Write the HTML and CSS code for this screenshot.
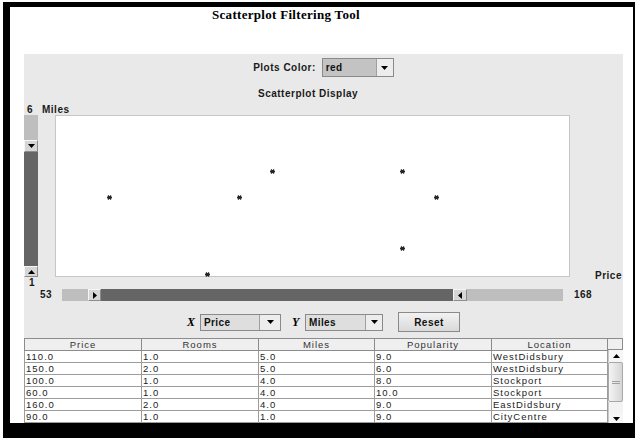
FILE: index.html
```html
<!DOCTYPE html>
<html lang="en">
<head>
<meta charset="utf-8">
<title>Scatterplot Filtering Tool</title>
<link rel="stylesheet" href="styles.css">
</head>
<body>
<div class="frame">
  <h1 class="title">Scatterplot Filtering Tool</h1>
  <div class="panel">
    <div class="color-row">
      <span class="lbl">Plots Color:</span>
      <div class="combo combo-color">
        <span class="combo-value">red</span>
        <span class="combo-btn"><svg width="7" height="4" viewBox="0 0 7 4"><polygon points="0,0 7,0 3.5,4"/></svg></span>
      </div>
    </div>

    <div class="lbl display-title">Scatterplot Display</div>
    <div class="lbl y-head"><span class="y-max">6</span><span>Miles</span></div>

    <div class="plot-row">
      <div class="vslider">
        <div class="track"></div>
        <div class="thumb thumb-top"><svg width="7" height="4" viewBox="0 0 7 4"><polygon points="0,0 7,0 3.5,4"/></svg></div>
        <div class="range"></div>
        <div class="thumb thumb-bottom"><svg width="7" height="4" viewBox="0 0 7 4"><polygon points="0,4 7,4 3.5,0"/></svg></div>
      </div>
      <div class="plot">
        <svg class="pt" style="left:53px;top:81px" viewBox="0 0 5 5"><path d="M0 2.5H5M1 0.5L4 4.5M4 0.5L1 4.5"/></svg>
        <svg class="pt" style="left:183px;top:81px" viewBox="0 0 5 5"><path d="M0 2.5H5M1 0.5L4 4.5M4 0.5L1 4.5"/></svg>
        <svg class="pt" style="left:216px;top:55px" viewBox="0 0 5 5"><path d="M0 2.5H5M1 0.5L4 4.5M4 0.5L1 4.5"/></svg>
        <svg class="pt" style="left:346px;top:55px" viewBox="0 0 5 5"><path d="M0 2.5H5M1 0.5L4 4.5M4 0.5L1 4.5"/></svg>
        <svg class="pt" style="left:380px;top:81px" viewBox="0 0 5 5"><path d="M0 2.5H5M1 0.5L4 4.5M4 0.5L1 4.5"/></svg>
        <svg class="pt" style="left:346px;top:132px" viewBox="0 0 5 5"><path d="M0 2.5H5M1 0.5L4 4.5M4 0.5L1 4.5"/></svg>
        <svg class="pt" style="left:151px;top:158px" viewBox="0 0 5 5"><path d="M0 2.5H5M1 0.5L4 4.5M4 0.5L1 4.5"/></svg>
      </div>
      <span class="lbl x-name">Price</span>
    </div>

    <div class="lbl y-min">1</div>

    <div class="x-row">
      <span class="lbl x-min">53</span>
      <div class="hslider">
        <div class="track track-lo"></div>
        <div class="thumb thumb-lo"><svg width="4" height="7" viewBox="0 0 4 7"><polygon points="0,0 4,3.5 0,7"/></svg></div>
        <div class="range"></div>
        <div class="thumb thumb-hi"><svg width="4" height="7" viewBox="0 0 4 7"><polygon points="4,0 0,3.5 4,7"/></svg></div>
        <div class="track track-hi"></div>
      </div>
      <span class="lbl x-max">168</span>
    </div>

    <div class="axis-row">
      <span class="axis">X</span>
      <div class="combo combo-x">
        <span class="combo-value">Price</span>
        <span class="combo-btn"><svg width="7" height="4" viewBox="0 0 7 4"><polygon points="0,0 7,0 3.5,4"/></svg></span>
      </div>
      <span class="axis axis-y">Y</span>
      <div class="combo combo-y">
        <span class="combo-value">Miles</span>
        <span class="combo-btn"><svg width="7" height="4" viewBox="0 0 7 4"><polygon points="0,0 7,0 3.5,4"/></svg></span>
      </div>
      <button class="reset" type="button">Reset</button>
    </div>

    <div class="table-pane">
      <table class="data">
        <colgroup>
          <col class="c1"><col class="c2"><col class="c3"><col class="c4"><col class="c5">
        </colgroup>
        <thead>
          <tr><th>Price</th><th>Rooms</th><th>Miles</th><th>Popularity</th><th>Location</th></tr>
        </thead>
        <tbody>
          <tr><td>110.0</td><td>1.0</td><td>5.0</td><td>9.0</td><td>WestDidsbury</td></tr>
          <tr><td>150.0</td><td>2.0</td><td>5.0</td><td>6.0</td><td>WestDidsbury</td></tr>
          <tr><td>100.0</td><td>1.0</td><td>4.0</td><td>8.0</td><td>Stockport</td></tr>
          <tr><td>60.0</td><td>1.0</td><td>4.0</td><td>10.0</td><td>Stockport</td></tr>
          <tr><td>160.0</td><td>2.0</td><td>4.0</td><td>9.0</td><td>EastDidsbury</td></tr>
          <tr><td>90.0</td><td>1.0</td><td>1.0</td><td>9.0</td><td>CityCentre</td></tr>
          <tr><td>130.0</td><td>2.0</td><td>4.0</td><td>8.0</td><td>Salford</td></tr>
        </tbody>
      </table>
      <div class="tscroll">
        <div class="tscroll-corner"></div>
        <div class="tscroll-btn"><svg width="7" height="4" viewBox="0 0 7 4"><polygon points="0,4 7,4 3.5,0"/></svg></div>
        <div class="tscroll-thumb"><span class="grip"></span></div>
        <div class="tscroll-track"></div>
        <div class="tscroll-btn"><svg width="7" height="4" viewBox="0 0 7 4"><polygon points="0,0 7,0 3.5,4"/></svg></div>
      </div>
    </div>
  </div>
</div>
</body>
</html>
```

FILE: styles.css
```css
* { box-sizing: border-box; }

html, body {
  margin: 0;
  padding: 0;
  background: #fff;
}

body {
  font-family: "Liberation Sans", Arial, sans-serif;
  color: #1a1a1a;
}

/* application window with its heavy black edge */
.frame {
  margin: 2px 0 0 3px;
  width: 632px;
  height: 436px;
  border: solid #000;
  border-width: 5px 2px 15px 7px;
  background: #fff;
  display: flex;
  flex-direction: column;
  overflow: hidden;
}

.title {
  flex: none;
  margin: 0;
  height: 47px;
  padding-left: 202px;
  font: bold 13px/15px "Liberation Serif", "Times New Roman", serif;
  letter-spacing: 0.3px;
  color: #000;
}

.panel {
  flex: 1;
  min-height: 0;
  margin: 0 10px 0 14px;
  background: #e9e9e9;
  display: flex;
  flex-direction: column;
  overflow: hidden;
}

.lbl {
  font-weight: bold;
  font-size: 10px;
  line-height: 12px;
  letter-spacing: 0.5px;
  color: #1a1a1a;
  white-space: nowrap;
}

svg polygon { fill: #000; }

/* combo boxes */
.combo {
  display: flex;
  border: 1px solid #8a8a8a;
  background: #dedede;
}

.combo-value {
  flex: 1;
  padding-left: 3px;
  font-weight: bold;
  font-size: 10px;
  letter-spacing: 0.4px;
  display: flex;
  align-items: center;
  color: #111;
}

.combo-btn {
  flex: none;
  width: 17px;
  border-left: 1px solid #a0a0a0;
  background: #ededed;
  display: flex;
  align-items: center;
  justify-content: center;
}

.color-row {
  flex: none;
  display: flex;
  justify-content: center;
  align-items: center;
  gap: 6px;
  padding-top: 4px;
}

.combo-color {
  width: 72px;
  height: 19px;
}

.combo-color .combo-value { background: #c3c3c3; }

.display-title {
  flex: none;
  margin-top: 11px;
  padding-left: 234px;
}

.y-head {
  flex: none;
  margin-top: 4px;
  height: 11px;
  display: flex;
  padding-left: 3px;
}

.y-max { width: 15px; }

/* plot area with the vertical range slider */
.plot-row {
  flex: none;
  display: flex;
  height: 162px;
}

.vslider {
  width: 14px;
  display: flex;
  flex-direction: column;
}

.track { background: #bebebe; }
.range { background: #656565; }

.thumb {
  background: #d6d6d6;
  border: 1px solid;
  border-color: #f6f6f6 #8c8c8c #8c8c8c #f6f6f6;
  display: flex;
  align-items: center;
  justify-content: center;
}

.vslider .track { height: 25px; }
.vslider .thumb-top { height: 12px; }
.vslider .range { height: 114px; }
.vslider .thumb-bottom { height: 11px; }

.plot {
  position: relative;
  margin-left: 17px;
  width: 515px;
  background: #fff;
  border: 1px solid #c6c6c6;
}

.pt {
  position: absolute;
  width: 5px;
  height: 5px;
  margin: -2px 0 0 -2px;
  fill: none;
  stroke: #262626;
  stroke-width: 1.3;
}

.x-name {
  align-self: flex-end;
  margin-left: 25px;
  margin-bottom: -5px;
}

.y-min {
  flex: none;
  height: 12px;
  padding-left: 5px;
}

/* horizontal range slider */
.x-row {
  flex: none;
  display: flex;
  align-items: center;
  height: 12px;
  padding-left: 16px;
}

.x-min { width: 22px; }

.hslider {
  width: 501px;
  height: 12px;
  display: flex;
}

.hslider .track-lo { width: 26px; }
.hslider .thumb-lo { width: 13px; }
.hslider .range { width: 352px; }
.hslider .thumb-hi { width: 14px; }
.hslider .track-hi { flex: 1; }

.x-max { margin-left: 11px; }

/* axis selectors */
.axis-row {
  flex: none;
  display: flex;
  align-items: center;
  height: 20px;
  margin-top: 11px;
  padding-left: 163px;
}

.axis {
  width: 13px;
  font: italic bold 12px/14px "Liberation Serif", "Times New Roman", serif;
  color: #000;
}

.axis-y { margin-left: 11px; }

.combo-x {
  width: 81px;
  height: 17px;
}

.combo-x .combo-btn { width: 21px; }

.combo-y {
  width: 78px;
  height: 17px;
}

.reset {
  margin-left: 15px;
  width: 62px;
  height: 20px;
  padding: 0;
  border: 1px solid #8a8a8a;
  background: linear-gradient(#f2f2f2, #d9d9d9);
  font: bold 10px "Liberation Sans", Arial, sans-serif;
  letter-spacing: 0.5px;
  color: #111;
}

/* data table */
.table-pane {
  flex: 1;
  min-height: 0;
  margin-top: 6px;
  display: flex;
  overflow: hidden;
}

.data {
  width: 583px;
  table-layout: fixed;
  border-collapse: collapse;
  background: #fff;
  font-family: "Liberation Sans", Arial, sans-serif;
  font-size: 9.5px;
  line-height: 11px;
  letter-spacing: 1px;
  color: #222;
  align-self: flex-start;
}

.c1, .c2, .c4 { width: 117px; }
.c3, .c5 { width: 116px; }

.data th {
  height: 12px;
  padding: 0;
  font-weight: normal;
  text-align: center;
  background: #efefef;
  border: 1px solid #8c8c8c;
  color: #333;
}

.data td {
  height: 11.67px;
  padding: 0 0 0 1px;
  border: 1px solid #9c9c9c;
  white-space: nowrap;
  overflow: hidden;
}

.tscroll {
  width: 16px;
  display: flex;
  flex-direction: column;
  background: #f3f3f3;
}

.tscroll-corner {
  height: 12px;
  flex: none;
  background: #efefef;
  border: 1px solid #8c8c8c;
  border-left: none;
}

.tscroll-btn {
  flex: none;
  height: 12px;
  display: flex;
  align-items: center;
  justify-content: center;
  background: #f6f6f6;
  border-left: 1px solid #c8c8c8;
}

.tscroll-thumb {
  flex: none;
  height: 40px;
  border: 1px solid #a8a8a8;
  border-radius: 2px;
  background: linear-gradient(90deg, #f4f4f4, #d6d6d6);
  display: flex;
  align-items: center;
  justify-content: center;
}

.grip {
  width: 8px;
  height: 3px;
  border-top: 1px solid #a0a0a0;
  border-bottom: 1px solid #a0a0a0;
}

.tscroll-track {
  flex: none;
  height: 11px;
  border-left: 1px solid #c8c8c8;
}
```
